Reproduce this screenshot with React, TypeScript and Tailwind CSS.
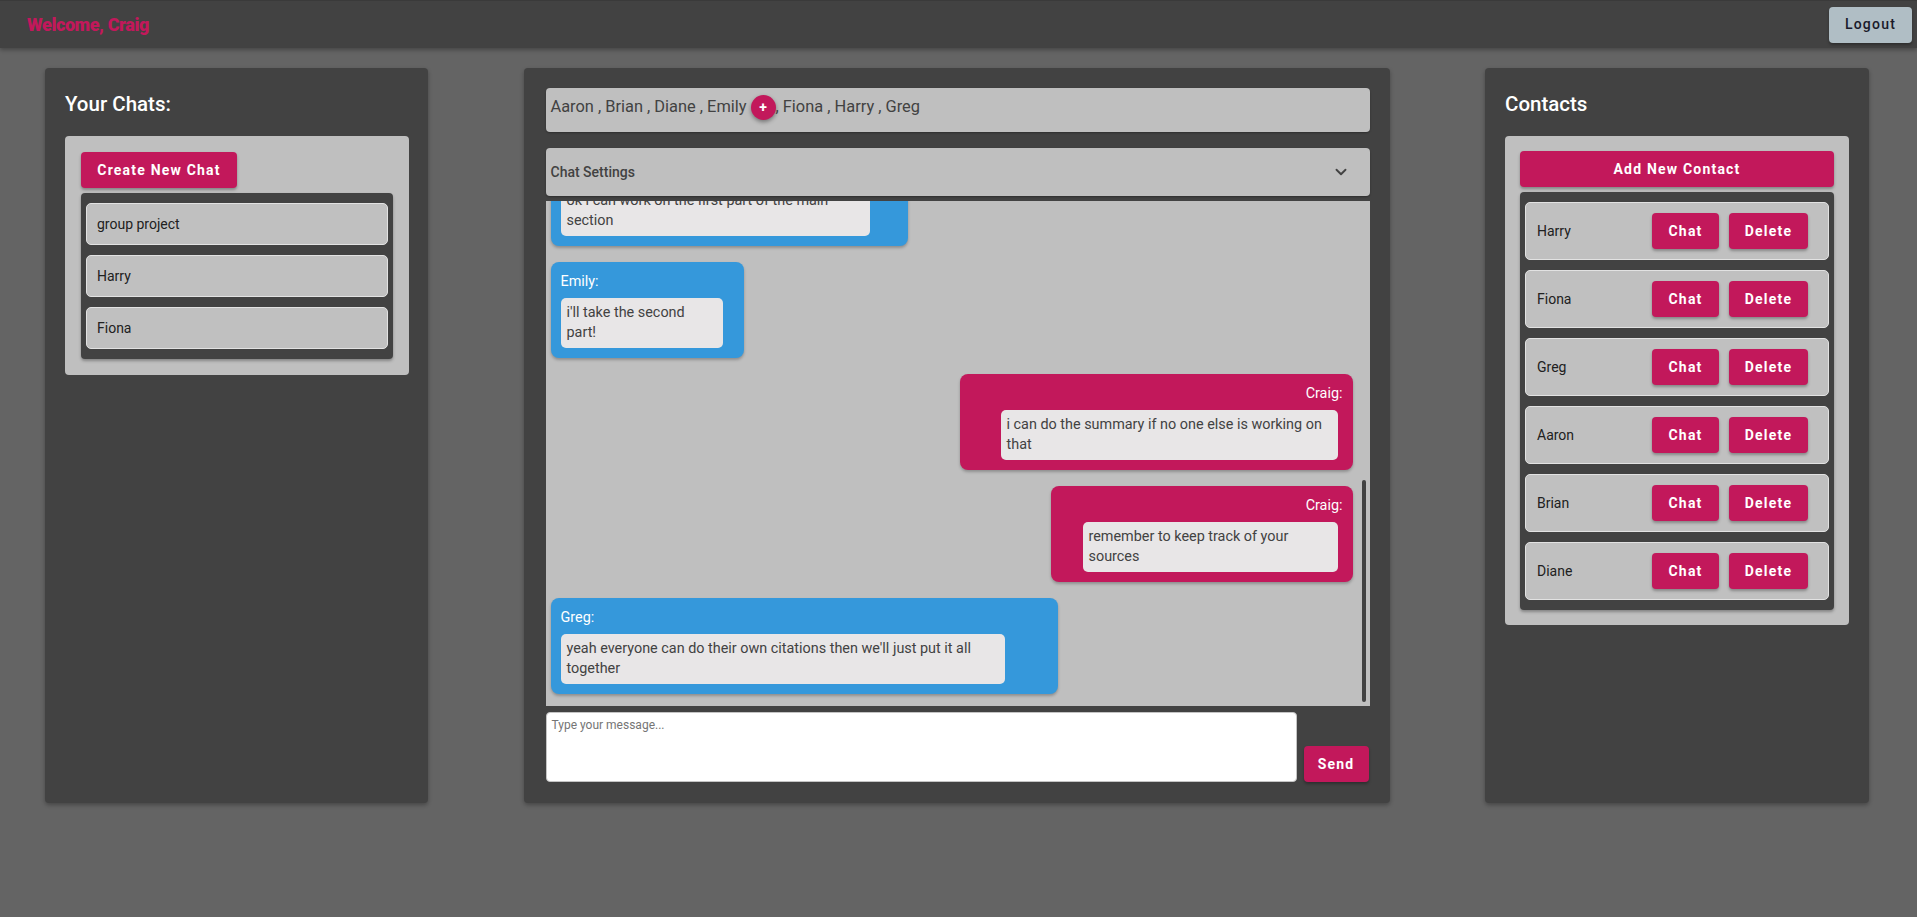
import { ChevronDown } from 'lucide-react'

const CHATS = ['group project', 'Harry', 'Fiona']
const CONTACTS = ['Harry', 'Fiona', 'Greg', 'Aaron', 'Brian', 'Diane']

const MESSAGES = [
  { from: 'Emily', mine: false, text: 'ok i can work on the first part of the main section', w: 'w-[357px]', inner: 'w-[309px]' },
  { from: 'Emily', mine: false, text: "i'll take the second part!", w: 'w-[193px]', inner: 'w-[162px]' },
  { from: 'Craig', mine: true, text: 'i can do the summary if no one else is working on that', w: 'w-[393px]', inner: 'w-[337px]' },
  { from: 'Craig', mine: true, text: 'remember to keep track of your sources', w: 'w-[302px]', inner: 'w-[255px]' },
  { from: 'Greg', mine: false, text: "yeah everyone can do their own citations then we'll just put it all together", w: 'w-[507px]', inner: 'w-[444px]' }
]

const PinkButton = ({ label, className }: { label: string; className?: string }) => (
  <button
    className={`h-[36px] rounded-[4px] bg-[#c2185b] text-white text-[14px] font-bold tracking-[1.2px] shadow-[0_2px_3px_rgba(0,0,0,0.3)] ${className ?? ''}`}
  >
    {label}
  </button>
)

const Bubble = ({ m }: { m: (typeof MESSAGES)[number] }) => (
  <div className={`flex ${m.mine ? 'justify-end' : 'justify-start'}`}>
    <div
      className={`${m.w} rounded-[8px] p-[10px] shadow-[0_2px_3px_rgba(0,0,0,0.25)] flex flex-col ${
        m.mine ? 'bg-[#c2185b] items-end' : 'bg-[#3598db] items-start'
      }`}
    >
      <div className="text-white text-[14.4px] leading-[20px] mb-[6px]">{m.from}:</div>
      <div
        className={`${m.inner} ${m.mine ? 'mr-[5px]' : ''} rounded-[5px] bg-[#e8e6e7] px-[6px] py-[5px] text-[14.4px] leading-[20px] text-[#424242]`}
      >
        {m.text}
      </div>
    </div>
  </div>
)

export default function App() {
  return (
    <div className="min-h-[917px] bg-[#646464] font-['Roboto',sans-serif]">
      <header className="h-[48px] bg-[#424242] border-t border-[#3a3a3a] flex items-center justify-between pl-[27px] pr-[5px] shadow-[0_2px_4px_rgba(0,0,0,0.3)]">
        <div className="text-[#c2185b] text-[18px] font-black tracking-[-0.4px]">Welcome, Craig</div>
        <button className="h-[36px] w-[83px] rounded-[4px] bg-[#b0bec5] text-[#1a1a2a] text-[14px] font-medium tracking-[1.2px] shadow-[0_2px_3px_rgba(0,0,0,0.3)]">
          Logout
        </button>
      </header>

      <main className="flex justify-between pl-[45px] pr-[48px] pt-[20px]">
        {/* chats */}
        <section className="w-[383px] h-[735px] rounded-[4px] bg-[#424242] p-[20px] shadow-[0_2px_4px_rgba(0,0,0,0.3)]">
          <h2 className="text-white text-[20.5px] font-medium leading-[32px] mb-[16px]">Your Chats:</h2>
          <div className="w-[344px] rounded-[4px] bg-[#bfbfbf] p-[16px]">
            <PinkButton label="Create New Chat" className="w-[156px]" />
            <div className="mt-[5px] rounded-[4px] bg-[#424242] px-[5px] py-[10px] flex flex-col gap-[10px] shadow-[0_2px_3px_rgba(0,0,0,0.3)]">
              {CHATS.map(c => (
                <div key={c} className="h-[42px] rounded-[5px] border border-[#e2e2e2] bg-[#c0c0c0] flex items-center pl-[10px] text-[14px] text-[#212121]">
                  {c}
                </div>
              ))}
            </div>
          </div>
        </section>

        {/* conversation */}
        <section className="w-[866px] h-[735px] rounded-[4px] bg-[#424242] pt-[20px] pl-[22px] pr-[20px] shadow-[0_2px_4px_rgba(0,0,0,0.3)] flex flex-col">
          <div className="h-[44px] rounded-[4px] bg-[#bfbfbf] flex items-start pt-[8px] pl-[5px] text-[16.4px] text-[#424242] shadow-[0_1px_2px_rgba(0,0,0,0.3)]">
            <span className="leading-[22px]">Aaron , Brian , Diane , Emily</span>
            <span className="ml-[4px] mt-[-1px] w-[25px] h-[25px] rounded-full bg-[#c2185b] text-white text-[14px] font-bold flex items-center justify-center shadow-[0_2px_4px_rgba(0,0,0,0.4)]">
              +
            </span>
            <span className="leading-[22px]">, Fiona , Harry , Greg</span>
          </div>

          <div className="mt-[16px] h-[48px] rounded-[4px] bg-[#bfbfbf] flex items-center justify-between pl-[5px] pr-[20px] shadow-[0_1px_2px_rgba(0,0,0,0.3)]">
            <span className="text-[14px] font-medium text-[#424242]">Chat Settings</span>
            <ChevronDown size={18} strokeWidth={2.5} className="text-[#424242]" />
          </div>

          <div className="relative mt-[5px] h-[505px] bg-[#bfbfbf] overflow-hidden flex flex-col justify-end gap-[16px] pl-[5px] pr-[17px] pb-[12px]">
            {MESSAGES.map((m, i) => (
              <Bubble key={i} m={m} />
            ))}
            <div className="absolute right-[4px] bottom-[4px] w-[4px] h-[222px] rounded-full bg-[#424242]" />
          </div>

          <div className="mt-[6px] flex items-end gap-[7px]">
            <textarea
              placeholder="Type your message..."
              className="w-[751px] h-[70px] resize-none rounded-[4px] border border-[#c4c4c4] bg-white px-[5px] py-[3px] text-[12px] text-[#424242] placeholder:text-[#757575] outline-none"
            />
            <PinkButton label="Send" className="w-[65px] tracking-[0.6px]" />
          </div>
        </section>

        {/* contacts */}
        <section className="w-[384px] h-[735px] rounded-[4px] bg-[#424242] p-[20px] shadow-[0_2px_4px_rgba(0,0,0,0.3)]">
          <h2 className="text-white text-[20.5px] font-medium leading-[32px] mb-[16px]">Contacts</h2>
          <div className="w-[344px] rounded-[4px] bg-[#bfbfbf] px-[15px] pt-[15px] pb-[15px]">
            <PinkButton label="Add New Contact" className="w-full" />
            <div className="mt-[5px] rounded-[4px] bg-[#424242] px-[5px] py-[10px] flex flex-col gap-[10px] shadow-[0_2px_3px_rgba(0,0,0,0.3)]">
              {CONTACTS.map(c => (
                <div key={c} className="h-[58px] rounded-[5px] border border-[#e2e2e2] bg-[#c0c0c0] flex items-center pl-[11px] pr-[20px] text-[14px] text-[#212121]">
                  <span className="flex-1">{c}</span>
                  <div className="flex gap-[10px]">
                    <PinkButton label="Chat" className="w-[67px]" />
                    <PinkButton label="Delete" className="w-[79px]" />
                  </div>
                </div>
              ))}
            </div>
          </div>
        </section>
      </main>
    </div>
  )
}
